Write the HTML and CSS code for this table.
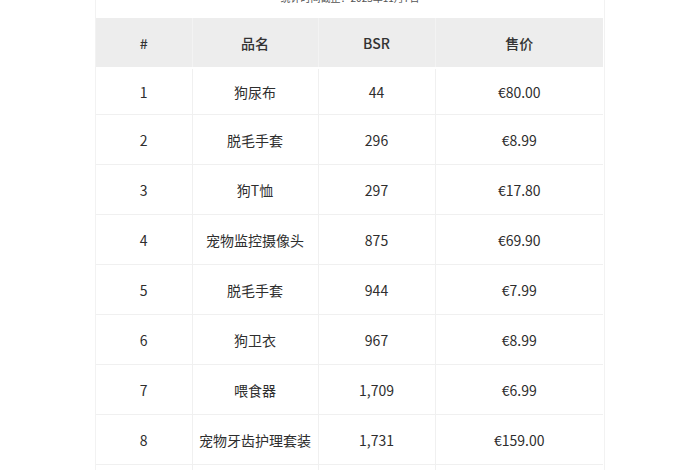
FILE: index.html
```html
<!DOCTYPE html>
<html lang="zh">
<head>
<meta charset="utf-8">
<link rel="stylesheet" href="styles.css">
</head>
<body>
<div class="sheet">
  <div class="caption">统计时间截止：2023年11月7日</div>
  <table class="grid">
    <colgroup>
      <col class="c1"><col class="c2"><col class="c3"><col class="c4">
    </colgroup>
    <thead>
      <tr><th>#</th><th>品名</th><th>BSR</th><th>售价</th></tr>
    </thead>
    <tbody>
      <tr class="first"><td>1</td><td>狗尿布</td><td>44</td><td>€80.00</td></tr>
      <tr><td>2</td><td>脱毛手套</td><td>296</td><td>€8.99</td></tr>
      <tr><td>3</td><td>狗T恤</td><td>297</td><td>€17.80</td></tr>
      <tr><td>4</td><td>宠物监控摄像头</td><td>875</td><td>€69.90</td></tr>
      <tr><td>5</td><td>脱毛手套</td><td>944</td><td>€7.99</td></tr>
      <tr><td>6</td><td>狗卫衣</td><td>967</td><td>€8.99</td></tr>
      <tr><td>7</td><td>喂食器</td><td>1,709</td><td>€6.99</td></tr>
      <tr><td>8</td><td>宠物牙齿护理套装</td><td>1,731</td><td>€159.00</td></tr>
      <tr class="stub"><td></td><td></td><td></td><td></td></tr>
    </tbody>
  </table>
</div>
</body>
</html>
```
FILE: styles.css
```css
html, body {
  margin: 0;
  padding: 0;
  background: #ffffff;
  overflow: hidden;
  height: 470px;
}
body {
  font-family: "Noto Sans CJK SC", "Noto Sans", sans-serif;
  color: #333333;
}
.sheet {
  width: 508px;
  margin-left: 95px;
  border-left: 1px solid #f2f2f2;
  border-right: 1px solid #f2f2f2;
  height: 470px;
  overflow: hidden;
}
.caption {
  font-size: 10px;
  line-height: 14px;
  margin-top: -9px;
  text-align: center;
  color: #555555;
  height: 14px;
  margin-bottom: 13px;
}
.grid {
  width: 507px;
  border-collapse: collapse;
  table-layout: fixed;
  font-size: 14px;
}
.c1 { width: 96px; }
.c2 { width: 126px; }
.c3 { width: 117px; }
.c4 { width: 168px; }
.grid th {
  background: #ededed;
  font-weight: 500;
  height: 49px;
  padding: 0;
  text-align: center;
  border-left: 1px solid #f3f3f3;
  color: #333333;
}
.grid th:first-child { border-left: none; }
.grid td {
  height: 49px;
  padding: 0;
  text-align: center;
  border-top: 1px solid #f0f0f0;
  border-left: 1px solid #f0f0f0;
  color: #2e2e2e;
}
.grid td:first-child { border-left: none; }
.grid tr.first td {
  height: 45px;
  border-top: 2px solid #ffffff;
}
.grid tr.stub td {
  height: 20px;
}
```
